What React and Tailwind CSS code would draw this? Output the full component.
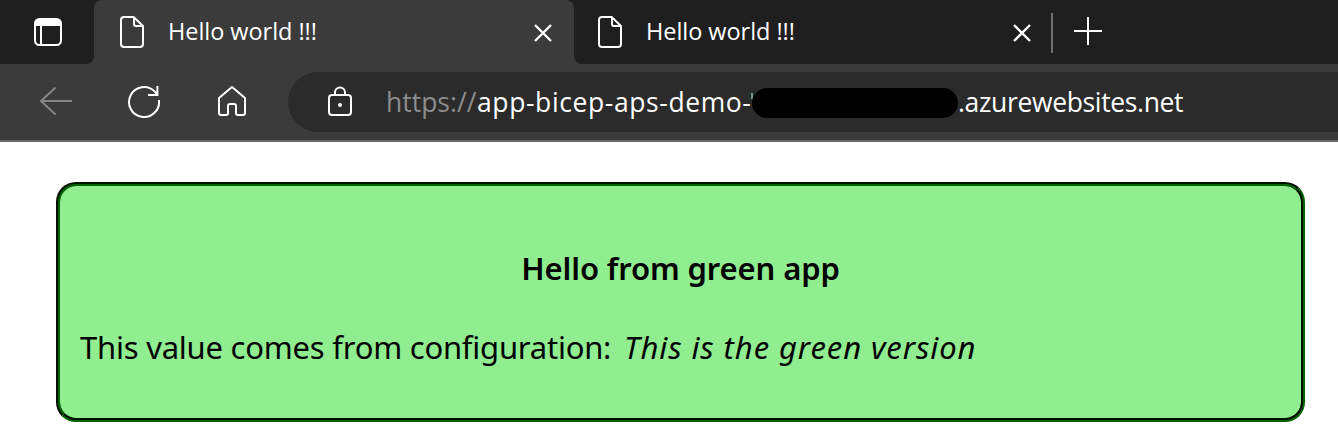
import React from "react";

const UI_FONT = "font-['Open_Sans','Noto_Sans',sans-serif]";

function PageIcon() {
  return (
    <svg width="28" height="36" viewBox="0 0 28 36" fill="none" stroke="#fff" strokeWidth="2" strokeLinejoin="round" className="shrink-0">
      <path d="M6 3H15.600L25 12V30a3 3 0 0 1-3 3H6a3 3 0 0 1-3-3V6a3 3 0 0 1 3-3Z" />
      <path d="M16 3V10a2 2 0 0 0 2 2H25" />
    </svg>
  );
}

function CloseIcon() {
  return (
    <svg width="18" height="18" viewBox="0 0 18 18" stroke="#fff" strokeWidth="2.3" className="shrink-0">
      <path d="M1 1 17 17M17 1 1 17" />
    </svg>
  );
}

function Tab({ title }) {
  return (
    <>
      <PageIcon />
      <span className="ml-[22px] mt-[-3px] w-[368px] shrink-0 whitespace-nowrap text-[23.5px] leading-8 tracking-[-0.05px] text-white">{title}</span>
    </>
  );
}

export default function App() {
  return (
    <div className={"h-[448px] w-[1338px] overflow-hidden bg-white " + UI_FONT}>
      <header className="flex h-16 bg-[#3b3b3b]">
        <div className="flex w-[94px] shrink-0 items-center rounded-br-lg bg-[#1f1f1f] pl-[33px]">
          <svg width="30" height="30" viewBox="0 0 30 30" fill="none" stroke="#fff" strokeWidth="2">
            <rect x="2" y="2" width="26" height="26" rx="4.5" />
            <path d="M2 9V6.5A4.5 4.5 0 0 1 6.500 2H23.500A4.500 4.500 0 0 1 28 6.500V9Z" fill="#fff" stroke="none" />
            <path d="M8 8V28" />
          </svg>
        </div>
        <div className="w-[480px] shrink-0 bg-[linear-gradient(#1f1f1f_50%,#3b3b3b_50%)]">
          <div className="flex h-16 items-center rounded-t-lg bg-[#3b3b3b] pl-6">
            <Tab title="Hello world !!!" />
            <span className="ml-[-2px] mt-[2px]"><CloseIcon /></span>
          </div>
        </div>
        <div className="flex grow items-center rounded-bl-lg bg-[#1f1f1f] pl-[22px]">
          <Tab title="Hello world !!!" />
          <span className="ml-[-1px] mt-[2px]"><CloseIcon /></span>
          <div className="ml-5 mt-[2px] h-10 w-[2px] bg-[#6e6e6e]" />
          <svg width="28" height="28" viewBox="0 0 28 28" stroke="#fff" strokeWidth="2" className="mt-[-2px] ml-[21px]">
            <path d="M14 0V28M0 14H28" />
          </svg>
        </div>
      </header>

      <div className="flex h-[78px] items-start border-b-2 border-[#6b6869] bg-[#3b3b3b] pt-2">
        <div className="flex h-[60px] w-72 shrink-0 items-center pl-[39px]">
          <svg width="34" height="30" viewBox="0 0 34 30" fill="none" stroke="#858585" strokeWidth="2" className="mt-[-2px]">
            <path d="M33 15H2M16.500 1.500 2 15 16.500 28.500" />
          </svg>
          <svg width="34" height="34" viewBox="0 0 34 34" fill="none" stroke="#fff" strokeWidth="2" className="ml-[54px]">
            <path d="M31.900 15A15 15 0 1 1 27.600 6.400L30.400 9.500M30.400 1V10H21" />
          </svg>
          <svg width="30" height="32" viewBox="0 0 30 32" fill="none" stroke="#fff" strokeWidth="2" strokeLinejoin="round" className="ml-[56px] mt-[-2px]">
            <path d="M2 13 15 2 28 13V28a2 2 0 0 1-2 2H21a2 2 0 0 1-2-2V21a2 2 0 0 0-2-2H13a2 2 0 0 0-2 2V28a2 2 0 0 1-2 2H4a2 2 0 0 1-2-2Z" />
          </svg>
        </div>
        <div className="flex h-[60px] grow items-center rounded-l-full bg-[#2b2b2b] pl-[39px]">
          <svg width="26" height="32" viewBox="0 0 26 32" fill="none" stroke="#fff" strokeWidth="2" className="mt-[-2px]">
            <rect x="2" y="10" width="22" height="20" rx="3" />
            <path d="M8 10V7.400a5 5 0 0 1 10 0V10" />
            <circle cx="13" cy="20" r="2" fill="#fff" stroke="none" />
          </svg>
          <div className="ml-[33px] flex items-center whitespace-nowrap text-[26.5px] leading-9 text-white">
            <span className="w-[91px] text-[#8c8c8c]">https://</span>
            <span className="w-[274px] tracking-[0.6px]">app-bicep-aps-demo-</span>
            <span className="mb-[12px] h-[6px] w-[2px] bg-[#6f8f8f]" />
            <span className="ml-[-1px] mt-[2px] h-[30px] w-[206px] rounded-full bg-black" />
            <span className="tracking-[-0.35px]">.azurewebsites.net</span>
          </div>
        </div>
      </div>

      <main className="pl-14 pt-10">
        <section className="h-60 w-[1249px] rounded-[20px] border-4 border-[#006400] bg-[#90ee90] px-5 text-black [border-style:groove] font-['Noto_Sans','Open_Sans',sans-serif]">
          <h1 className="mt-[62px] text-center text-[31px] font-semibold leading-10 tracking-[-0.12px]">Hello from green app</h1>
          <p className="mt-[39px] whitespace-nowrap text-[31px] leading-10 tracking-[-0.23px]">
            This value comes from configuration:{" "}
            <em className="ml-[5px] tracking-[0.9px]">This is the green version</em>
          </p>
        </section>
      </main>
    </div>
  );
}
